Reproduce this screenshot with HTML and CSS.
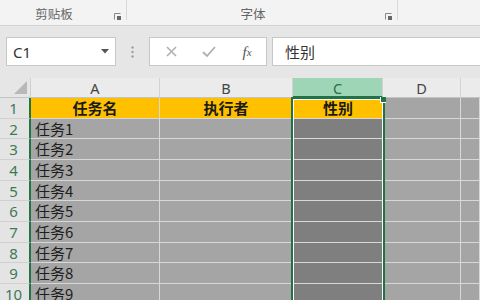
FILE: index.html
```html
<!DOCTYPE html>
<html lang="zh-CN">
<head>
<meta charset="utf-8">
<link rel="stylesheet" href="styles.css">
</head>
<body>
<div class="ribbon">
  <div class="group g1">
    <span class="glabel">剪贴板</span>
    <span class="launcher"><svg width="7" height="7" viewBox="0 0 7 7"><path d="M0.5 6.5V0.5H6.5" fill="none" stroke="#888" stroke-width="1"/><rect x="3" y="3" width="4" height="4" fill="#666"/></svg></span>
  </div>
  <div class="group g2">
    <span class="glabel">字体</span>
    <span class="launcher"><svg width="7" height="7" viewBox="0 0 7 7"><path d="M0.5 6.5V0.5H6.5" fill="none" stroke="#888" stroke-width="1"/><rect x="3" y="3" width="4" height="4" fill="#666"/></svg></span>
  </div>
  <div class="group g3"></div>
</div>
<div class="fbar">
  <div class="namebox">
    <span class="nbtext">C1</span>
    <svg class="nbarrow" width="8" height="5" viewBox="0 0 8 5"><path d="M0 0H8L4 4.5Z" fill="#555"/></svg>
  </div>
  <div class="dots"><svg width="3" height="12" viewBox="0 0 3 12"><circle cx="1.5" cy="1.5" r="1.2" fill="#a0a0a0"/><circle cx="1.5" cy="6" r="1.2" fill="#a0a0a0"/><circle cx="1.5" cy="10.5" r="1.2" fill="#a0a0a0"/></svg></div>
  <div class="btns">
    <span class="btn"><svg width="11" height="11" viewBox="0 0 11 11"><path d="M1 1L10 10M10 1L1 10" stroke="#b0b0b0" stroke-width="1.6" fill="none"/></svg></span>
    <span class="btn"><svg width="14" height="11" viewBox="0 0 14 11"><path d="M1 6L5 10L13 1" stroke="#b0b0b0" stroke-width="1.8" fill="none"/></svg></span>
    <span class="btn fx">f<small>x</small></span>
  </div>
  <div class="finput">性别</div>
</div>
<div class="sheet">
  <div class="grid">
    <div class="corner"><svg width="13" height="13" viewBox="0 0 13 13"><path d="M13 0V13H0Z" fill="#b8b8b8"/></svg></div>
    <div class="ch">A</div><div class="ch">B</div><div class="ch sel">C</div><div class="ch">D</div><div class="ch last"></div>

    <div class="rh">1</div><div class="c y b">任务名</div><div class="c y b">执行者</div><div class="c y b cc">性别</div><div class="c"></div><div class="c"></div>
    <div class="rh">2</div><div class="c">任务1</div><div class="c"></div><div class="c cc"></div><div class="c"></div><div class="c"></div>
    <div class="rh">3</div><div class="c">任务2</div><div class="c"></div><div class="c cc"></div><div class="c"></div><div class="c"></div>
    <div class="rh">4</div><div class="c">任务3</div><div class="c"></div><div class="c cc"></div><div class="c"></div><div class="c"></div>
    <div class="rh">5</div><div class="c">任务4</div><div class="c"></div><div class="c cc"></div><div class="c"></div><div class="c"></div>
    <div class="rh">6</div><div class="c">任务5</div><div class="c"></div><div class="c cc"></div><div class="c"></div><div class="c"></div>
    <div class="rh">7</div><div class="c">任务6</div><div class="c"></div><div class="c cc"></div><div class="c"></div><div class="c"></div>
    <div class="rh">8</div><div class="c">任务7</div><div class="c"></div><div class="c cc"></div><div class="c"></div><div class="c"></div>
    <div class="rh">9</div><div class="c">任务8</div><div class="c"></div><div class="c cc"></div><div class="c"></div><div class="c"></div>
    <div class="rh">10</div><div class="c">任务9</div><div class="c"></div><div class="c cc"></div><div class="c"></div><div class="c"></div>
  </div>
  <div class="selection"><span class="handle"></span></div>
</div>
</body>
</html>
```
FILE: styles.css
```css
* { box-sizing: border-box; }
html, body { margin: 0; padding: 0; }
body {
  width: 480px;
  height: 300px;
  overflow: hidden;
  background: #e6e6e6;
  font-family: "Noto Sans", "Noto Sans CJK SC", sans-serif;
}

.ribbon {
  display: flex;
  height: 26px;
  background: #f3f3f3;
  border-bottom: 1px solid #d4d4d4;
}
.group {
  display: flex;
  align-items: flex-start;
  height: 20px;
  border-right: 1px solid #d8d8d8;
}
.g1 { width: 127px; }
.g2 { width: 271px; }
.g3 { flex: 1; border-right: none; }
.glabel {
  flex: 1;
  text-align: center;
  font-family: "Noto Sans CJK SC", sans-serif;
  font-size: 12.5px;
  line-height: 16px;
  padding-top: 6px;
  color: #666;
}
.launcher {
  width: 18px;
  padding-left: 6px;
  padding-top: 13px;
  line-height: 0;
}

.fbar {
  display: flex;
  align-items: center;
  height: 52px;
  padding: 11px 0 12px 6px;
}
.namebox {
  display: flex;
  align-items: center;
  justify-content: space-between;
  width: 110px;
  height: 29px;
  background: #fff;
  border: 1px solid #c8c8c8;
  padding: 0 6px 0 6px;
}
.nbtext {
  font-family: "Noto Sans", sans-serif;
  font-size: 15px;
  color: #333;
}
.dots {
  width: 33px;
  display: flex;
  justify-content: center;
  line-height: 0;
  padding-right: 1px;
}
.btns {
  display: flex;
  align-items: center;
  width: 118px;
  height: 29px;
  background: #fff;
  border: 1px solid #c8c8c8;
  padding-left: 2px;
}
.btn {
  width: 38px;
  display: flex;
  justify-content: center;
  align-items: center;
  line-height: 0;
}
.fx {
  font-family: "Liberation Serif", serif;
  font-style: italic;
  font-size: 15px;
  line-height: 16px;
  color: #555;
}
.fx small { font-size: 11px; }
.finput {
  flex: 1;
  height: 29px;
  margin-left: 5px;
  background: #fff;
  border: 1px solid #c8c8c8;
  border-right: none;
  padding-left: 12px;
  font-family: "Noto Sans CJK SC", sans-serif;
  font-size: 15px;
  line-height: 27px;
  color: #333;
}

.sheet {
  position: relative;
}
.grid {
  display: grid;
  grid-template-columns: 31px 129px 133px 90px 78px 1fr;
  grid-template-rows: 20px;
  grid-auto-rows: 20.67px;
}
.corner {
  background: #e6e6e6;
  border-right: 1px solid #cfcfcf;
  border-bottom: 1px solid #c4c4c4;
  display: flex;
  align-items: flex-end;
  justify-content: flex-end;
  padding: 0 3px 3px 0;
  line-height: 0;
}
.ch {
  background: #ebebeb;
  border-right: 1px solid #d2d2d2;
  border-bottom: 1px solid #c4c4c4;
  text-align: center;
  font-family: "Noto Sans", sans-serif;
  font-size: 14.5px;
  line-height: 20px;
  color: #444;
}
.ch.sel {
  background: #9fd5b7;
  color: #217346;
  border-bottom: 2px solid #217346;
}
.ch.last { border-right: none; }
.rh {
  background: #e4e4e4;
  border-right: 2px solid #217346;
  border-bottom: 1px solid #d0d0d0;
  text-align: center;
  font-family: "Noto Sans", sans-serif;
  font-size: 15px;
  line-height: 20px;
  color: #3b7a58;
  padding-right: 2px;
}
.c {
  background: #a5a5a5;
  border-right: 1px solid #d8d8d8;
  border-bottom: 1px solid #d8d8d8;
  font-family: "Noto Sans CJK SC", sans-serif;
  font-size: 15px;
  line-height: 20px;
  color: #1e1e1e;
  padding-left: 4px;
  white-space: nowrap;
  overflow: hidden;
}
.c.cc { background: #7f7f7f; border-right: none; }
.c.y { background: #ffc000; }
.c.b {
  font-weight: bold;
  text-align: center;
  padding-left: 0;
  color: #1a1a1a;
}

.selection {
  position: absolute;
  left: 291px;
  top: 19px;
  width: 94px;
  height: 210px;
  border: 2px solid #217346;
  box-shadow: inset 0 0 0 1px #ffffff;
  pointer-events: none;
}
.handle {
  position: absolute;
  top: -2px;
  right: -3px;
  width: 6px;
  height: 6px;
  background: #217346;
  border-left: 1px solid #fff;
  border-bottom: 1px solid #fff;
}
```
